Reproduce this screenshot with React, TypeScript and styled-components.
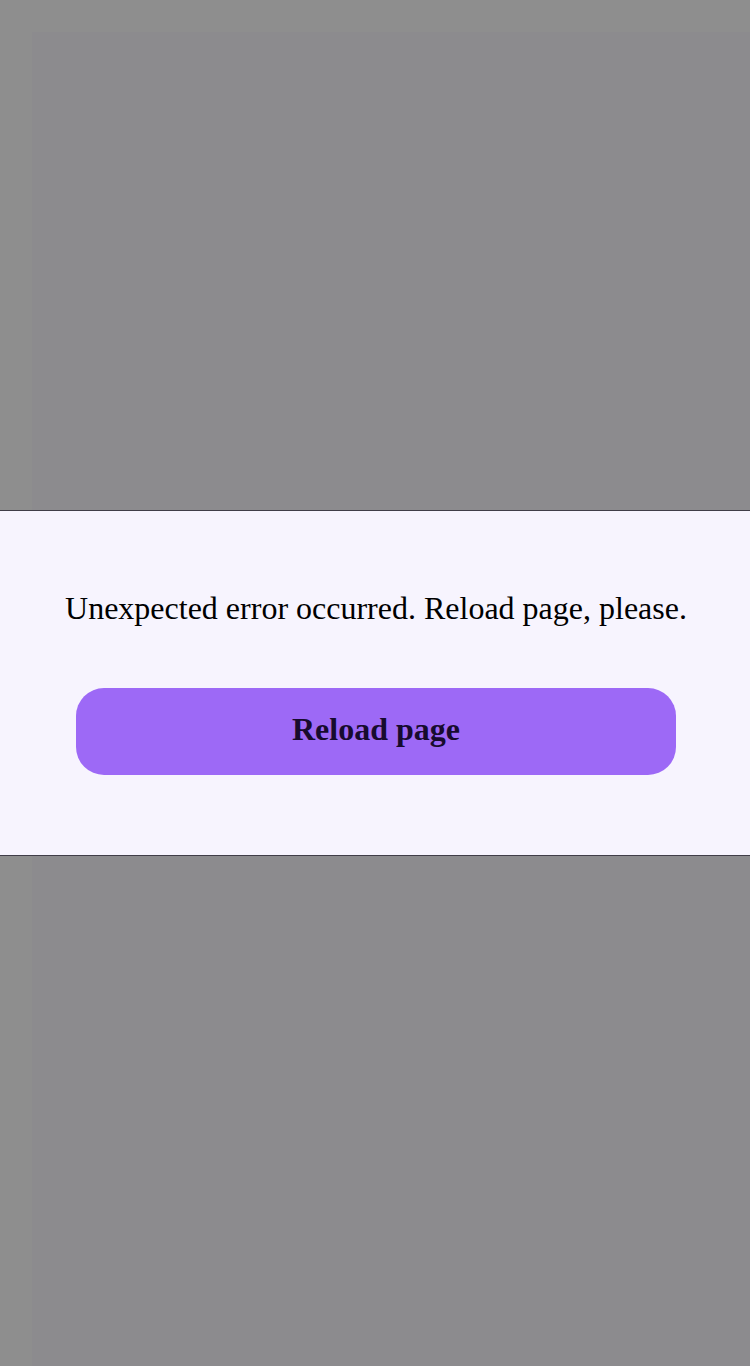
import React from "react";
import styled, { createGlobalStyle } from "styled-components";

const Global = createGlobalStyle`
  html, body { margin: 0; padding: 0; }
  body { background: #8e8e8e; font-family: "Liberation Serif", "Times New Roman", serif; }
  #root { min-height: 100vh; }
`;

const Page = styled.div`
  min-height: 100vh;
  box-sizing: border-box;
  padding: 32px 0 0 32px;
  display: flex;
`;

const Content = styled.div`
  flex: 1;
  background: #8c8b8e;
`;

const Overlay = styled.div`
  position: fixed;
  inset: 0;
  display: flex;
  flex-direction: column;
  justify-content: center;
`;

const Dialog = styled.div`
  background: #f7f4fe;
  border-top: 1px solid #403d48;
  border-bottom: 1px solid #403d48;
  padding: 79px 74px 80px 76px;
  display: flex;
  flex-direction: column;
  align-items: center;
  gap: 61px;
`;

const Message = styled.p`
  margin: 0;
  font-size: 32px;
  line-height: 37px;
  color: #000;
  text-align: center;
  white-space: nowrap;
`;

const ReloadButton = styled.button`
  width: 600px;
  height: 87px;
  padding: 0 0 4px;
  border: none;
  border-radius: 28px;
  background: #9d69f6;
  color: #170b2e;
  font-family: "Liberation Serif", "Times New Roman", serif;
  font-weight: bold;
  font-size: 32px;
  cursor: pointer;
`;

export default function App() {
  return (
    <>
      <Global />
      <Page>
        <Content />
      </Page>
      <Overlay>
        <Dialog>
          <Message>Unexpected error occurred. Reload page, please.</Message>
          <ReloadButton>Reload page</ReloadButton>
        </Dialog>
      </Overlay>
    </>
  );
}
